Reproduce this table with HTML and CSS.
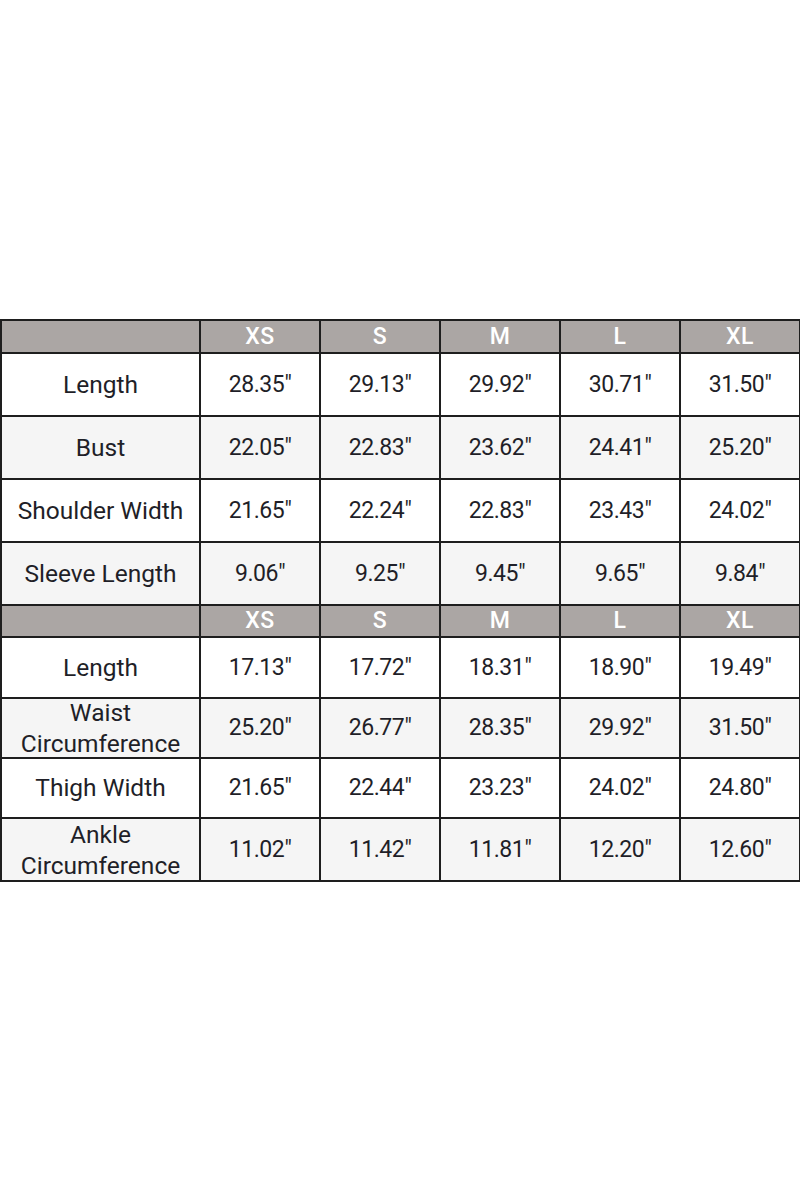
FILE: index.html
```html
<!DOCTYPE html>
<html>
<head>
<meta charset="utf-8">
<link rel="stylesheet" href="styles.css">
</head>
<body>
<div class="page">
<table class="chart">
  <colgroup><col class="c-label"><col class="c-size"><col class="c-size"><col class="c-size"><col class="c-size"><col class="c-size"></colgroup>
  <tr class="head"><th></th><th>XS</th><th>S</th><th>M</th><th>L</th><th>XL</th></tr>
  <tr class="r63 odd"><td class="lbl">Length</td><td>28.35"</td><td>29.13"</td><td>29.92"</td><td>30.71"</td><td>31.50"</td></tr>
  <tr class="r63 even"><td class="lbl">Bust</td><td>22.05"</td><td>22.83"</td><td>23.62"</td><td>24.41"</td><td>25.20"</td></tr>
  <tr class="r63 odd"><td class="lbl">Shoulder Width</td><td>21.65"</td><td>22.24"</td><td>22.83"</td><td>23.43"</td><td>24.02"</td></tr>
  <tr class="r63 even"><td class="lbl">Sleeve Length</td><td>9.06"</td><td>9.25"</td><td>9.45"</td><td>9.65"</td><td>9.84"</td></tr>
  <tr class="head head2"><th></th><th>XS</th><th>S</th><th>M</th><th>L</th><th>XL</th></tr>
  <tr class="r61 odd"><td class="lbl">Length</td><td>17.13"</td><td>17.72"</td><td>18.31"</td><td>18.90"</td><td>19.49"</td></tr>
  <tr class="r60 even"><td class="lbl"><div class="two">Waist<br>Circumference</div></td><td>25.20"</td><td>26.77"</td><td>28.35"</td><td>29.92"</td><td>31.50"</td></tr>
  <tr class="r60 odd"><td class="lbl">Thigh Width</td><td>21.65"</td><td>22.44"</td><td>23.23"</td><td>24.02"</td><td>24.80"</td></tr>
  <tr class="r63 even"><td class="lbl"><div class="two">Ankle<br>Circumference</div></td><td>11.02"</td><td>11.42"</td><td>11.81"</td><td>12.20"</td><td>12.60"</td></tr>
</table>
</div>
</body>
</html>
```
FILE: styles.css
```css
html, body {
  margin: 0;
  padding: 0;
  background: #ffffff;
}
.page {
  width: 800px;
  height: 1200px;
  padding-top: 319px;
  box-sizing: border-box;
}
.chart {
  width: 800px;
  border-collapse: collapse;
  table-layout: fixed;
  font-family: Roboto, "Liberation Sans", sans-serif;
  color: #1f1f28;
}
.c-label { width: 199px; }
.c-size { width: 120px; }
.chart th, .chart td {
  border: 2px solid #1e1e1e;
  text-align: center;
  vertical-align: middle;
  padding: 0 4px;
  line-height: 30px;
}
.chart td {
  font-size: 23px;
  letter-spacing: -0.4px;
}
.chart td.lbl {
  font-size: 24.5px;
  letter-spacing: 0;
  padding: 0;
}
.two {
  height: 54px;
  display: flex;
  flex-direction: column;
  justify-content: center;
  align-items: center;
  line-height: 31px;
  white-space: nowrap;
}
.head { height: 33px; background: #aba6a4; }
.head2 { height: 32px; }
.head th {
  color: #ffffff;
  font-size: 23px;
  font-weight: 500;
  line-height: 26px;
  letter-spacing: 0.5px;
}
.r63 { height: 63px; }
.r61 { height: 61px; }
.r60 { height: 60px; }
.odd { background: #ffffff; }
.even { background: #f5f5f5; }
```
